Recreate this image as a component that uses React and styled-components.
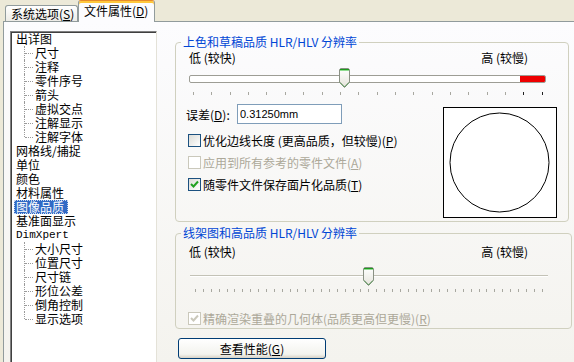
import React from 'react'
import styled, { createGlobalStyle } from 'styled-components'

const GlobalStyle = createGlobalStyle`
  html, body {
    margin: 0;
    padding: 0;
    overflow: hidden;
  }
  body {
    font-family: 'Noto Sans CJK SC', 'Liberation Sans', sans-serif;
    font-size: 12px;
    color: #000;
  }
`

const treeItems = [
  { label: '出详图' },
  { label: '尺寸', child: true },
  { label: '注释', child: true },
  { label: '零件序号', child: true },
  { label: '箭头', child: true },
  { label: '虚拟交点', child: true },
  { label: '注解显示', child: true },
  { label: '注解字体', child: true, last: true },
  { label: '网格线/捕捉' },
  { label: '单位' },
  { label: '颜色' },
  { label: '材料属性' },
  { label: '图像品质', selected: true },
  { label: '基准面显示' },
  { label: 'DimXpert', mono: true },
  { label: '大小尺寸', child: true },
  { label: '位置尺寸', child: true },
  { label: '尺寸链', child: true },
  { label: '形位公差', child: true },
  { label: '倒角控制', child: true },
  { label: '显示选项', child: true, last: true }
]

const Window = styled.div`
  width: 574px;
  height: 362px;
  background: #ece9d8;
  overflow: hidden;
  display: flex;
  flex-direction: column;
`

const TabStrip = styled.div`
  display: flex;
  align-items: flex-end;
  height: 21px;
  padding-left: 5px;
  flex-shrink: 0;
  position: relative;
  z-index: 1;
`

const Tab = styled.div`
  box-sizing: border-box;
  width: ${p => (p.$active ? 77 : 73)}px;
  height: ${p => (p.$active ? 22 : 16)}px;
  margin-bottom: ${p => (p.$active ? -1 : 0)}px;
  border: 1px solid #919b9c;
  border-bottom: none;
  border-top-color: ${p => (p.$active ? '#e68b2c' : '#919b9c')};
  border-radius: 3px 3px 0 0;
  box-shadow: ${p => (p.$active ? 'inset 0 2px 0 #ffc83c' : 'none')};
  background: ${p => (p.$active ? '#fcfcfe' : 'linear-gradient(#ffffff, #ecebe6)')};
  padding: ${p => (p.$active ? '3px' : '1px')} 0 0 5px;
  line-height: 14px;
  white-space: nowrap;
`

const Panel = styled.div`
  flex: 1;
  display: flex;
  gap: 18px;
  margin-left: 3px;
  padding: 9px 0 0 6px;
  border-left: 1px solid #919b9c;
  border-top: 1px solid #919b9c;
  background: linear-gradient(#fcfcfe, #f4f3ee);
  overflow: hidden;
`

const Tree = styled.div`
  box-sizing: border-box;
  width: 147px;
  height: 340px;
  flex-shrink: 0;
  padding-left: 5px;
  background: #fff;
  border: 1px solid;
  border-color: #808080 #e4e2d8 #e4e2d8 #808080;
  box-shadow: inset 1px 1px 0 #404040;
`

const TreeRow = styled.div`
  display: flex;
  align-items: center;
  height: 14px;
  line-height: 14px;
  white-space: nowrap;
`

const Connector = styled.span`
  position: relative;
  width: 8px;
  height: ${p => (p.$last ? '7px' : '14px')};
  align-self: flex-start;
  margin: 0 2px 0 8px;
  border-left: 1px dotted #9a9a9a;
  flex-shrink: 0;

  &::after {
    content: '';
    position: absolute;
    left: 0;
    top: 7px;
    width: 8px;
    border-top: 1px dotted #9a9a9a;
  }
`

const TreeLabel = styled.span`
  margin-left: ${p => (p.$selected ? -2 : 0)}px;
  padding: ${p => (p.$selected ? '0 4px 0 2px' : '0')};
  background: ${p => (p.$selected ? '#316ac5' : 'transparent')};
  color: ${p => (p.$selected ? '#fff' : '#000')};
  font-family: ${p => (p.$mono ? "'Liberation Mono', monospace" : 'inherit')};
  font-size: ${p => (p.$mono ? '11px' : '12px')};
  outline: ${p => (p.$selected ? '1px dotted #c8d8f0' : 'none')};
  outline-offset: -1px;
`

const Content = styled.div`
  display: flex;
  flex-direction: column;
  padding-top: 4px;
`

const Group = styled.fieldset`
  box-sizing: border-box;
  margin: ${p => p.$mt || 0}px 0 0 0;
  width: ${p => p.$width}px;
  height: ${p => p.$height}px;
  padding: ${p => p.$pt}px ${p => p.$pr}px 0 13px;
  border: 1px solid #d0d0bf;
  border-radius: 4px;
  min-inline-size: 0;
`

const Legend = styled.legend`
  padding: 0 2px;
  margin-left: -8px;
  line-height: 14px;
  color: #0046d5;
  white-space: nowrap;
`

const LabelRow = styled.div`
  display: flex;
  justify-content: space-between;
  height: 14px;
  line-height: 14px;
  padding-right: ${p => p.$pr}px;
  white-space: nowrap;
`

const SliderBox = styled.div`
  position: relative;
  display: flex;
  flex-direction: column;
  height: ${p => p.$h}px;
  margin-right: ${p => p.$mr}px;
`

const Track = styled.div`
  box-sizing: border-box;
  display: flex;
  height: 8px;
  margin-top: 10px;
  border: 1px solid #9d9d95;
  border-radius: 2px;
  background: #fff;
  overflow: hidden;
`

const TrackFill = styled.div`
  margin-left: auto;
  width: 25px;
  background: #ee0000;
`

const ThinTrack = styled.div`
  margin: 16px 9px 0 1px;
  border-top: 1px solid #c3c2b6;
  border-bottom: 1px solid #ffffff;
`

const ThumbSpot = styled.div`
  position: absolute;
  top: ${p => p.$top}px;
  left: ${p => p.$left}px;
  line-height: 0;
`

const Ticks = styled.div`
  display: flex;
  justify-content: space-between;
  height: 3px;
  margin-top: ${p => p.$mt}px;
  padding: 0 ${p => p.$pr}px 0 ${p => p.$pl}px;
`

const Tick = styled.span`
  width: 1px;
  height: 3px;
  background: ${p => (p.$dark ? '#202020' : '#a8a8a0')};
`

const Lower = styled.div`
  display: flex;
  justify-content: space-between;
  margin-top: 9px;
`

const FieldRow = styled.div`
  display: flex;
  align-items: center;
  height: 20px;
  margin-left: -3px;
`

const FieldLabel = styled.span`
  width: 51px;
  white-space: nowrap;
`

const Input = styled.input`
  box-sizing: border-box;
  width: 105px;
  height: 20px;
  margin: 0;
  padding: 0 0 0 2px;
  border: 1px solid #7f9db9;
  background: #fff;
  font-family: 'Liberation Sans', sans-serif;
  font-size: 11px;
  color: #000;
  outline: none;
`

const Checks = styled.div`
  margin-top: ${p => p.$mt}px;
`

const CheckRow = styled.div`
  display: flex;
  align-items: center;
  height: ${p => p.$h || 22}px;
  margin-left: -1px;
  white-space: nowrap;
  color: ${p => (p.$disabled ? '#aca899' : '#000')};
`

const Box = styled.span`
  box-sizing: border-box;
  display: inline-flex;
  align-items: center;
  justify-content: center;
  width: 13px;
  height: 13px;
  margin-right: 2px;
  flex-shrink: 0;
  border: 1px solid ${p => (p.$disabled ? '#cac8bb' : '#1c5180')};
  background: ${p => (p.$disabled ? '#fff' : 'linear-gradient(135deg, #dcdcd7, #ffffff)')};
`

const Preview = styled.div`
  box-sizing: border-box;
  width: 114px;
  height: 111px;
  margin-top: 3px;
  border: 1px solid #000;
  background: #fff;
  line-height: 0;
`

const Button = styled.button`
  box-sizing: border-box;
  width: 148px;
  height: 21px;
  margin: 9px 0 0 3px;
  padding: 0;
  border: 1px solid #003c74;
  border-radius: 3px;
  background: linear-gradient(#ffffff, #f3f3ee 80%, #d8d2c6);
  font-family: 'Noto Sans CJK SC', sans-serif;
  font-size: 12px;
  line-height: 14px;
  color: #000;
`

const Thumb = ({ h = 20 }) => (
  <svg width="11" height={h} viewBox={`0 0 11 ${h}`}>
    <defs>
      <linearGradient id={`thumb${h}`} x1="0" x2="0" y1="0" y2="1">
        <stop offset="0" stopColor="#ffffff" />
        <stop offset="1" stopColor="#e4e3da" />
      </linearGradient>
    </defs>
    <path
      d={`M1.5 0.5 H9.5 L10.5 1.5 V${h - 6} L5.5 ${h - 0.5} L0.5 ${h - 6} V1.5 Z`}
      fill={`url(#thumb${h})`}
      stroke="#8a9184"
    />
    <path d="M1 1.5 H10" stroke="#1e9a1e" />
    <path d="M1 2.5 H10" stroke="#8fdc8f" />
    <path
      d={`M1 ${h - 5.5} L5.5 ${h - 1} L10 ${h - 5.5}`}
      stroke="#4f8f4f"
      fill="none"
    />
  </svg>
)

const Check = ({ color }) => (
  <svg width="9" height="9" viewBox="0 0 9 9">
    <path d="M1 4 L3.5 6.5 L8 1.5" stroke={color} strokeWidth="2" fill="none" />
  </svg>
)

const CheckItem = ({ checked, disabled, h, children }) => (
  <CheckRow $disabled={disabled} $h={h}>
    <Box $disabled={disabled}>
      {checked ? <Check color={disabled ? '#cac8bb' : '#21a121'} /> : null}
    </Box>
    {children}
  </CheckRow>
)

export default function App() {
  return (
    <Window>
      <GlobalStyle />
      <TabStrip>
        <Tab>
          系统选项(<u>S</u>)
        </Tab>
        <Tab $active>
          文件属性(<u>D</u>)
        </Tab>
      </TabStrip>
      <Panel>
        <Tree>
          {treeItems.map(item => (
            <TreeRow key={item.label}>
              {item.child ? <Connector $last={item.last} /> : null}
              <TreeLabel $selected={item.selected} $mono={item.mono}>
                {item.label}
              </TreeLabel>
            </TreeRow>
          ))}
        </Tree>
        <Content>
          <Group $width={394} $height={187} $pt={2} $pr={11}>
            <Legend>上色和草稿品质 HLR/HLV 分辨率</Legend>
            <LabelRow $pr={29}>
              <span>低 (较快)</span>
              <span>高 (较慢)</span>
            </LabelRow>
            <SliderBox $h={24} $mr={11}>
              <Track>
                <TrackFill />
              </Track>
              <ThumbSpot $top={3} $left={150}>
                <Thumb h={20} />
              </ThumbSpot>
            </SliderBox>
            <Ticks $mt={3} $pl={4} $pr={14}>
              {Array.from({ length: 20 }, (_, i) => (
                <Tick key={i} $dark={i >= 18} />
              ))}
            </Ticks>
            <Lower>
              <div>
                <FieldRow>
                  <FieldLabel>
                    误差(<u>D</u>):
                  </FieldLabel>
                  <Input readOnly value="0.31250mm" />
                </FieldRow>
                <Checks $mt={5}>
                  <CheckItem>
                    优化边线长度 (更高品质，但较慢)(<u>P</u>)
                  </CheckItem>
                  <CheckItem disabled>
                    应用到所有参考的零件文件(<u>A</u>)
                  </CheckItem>
                  <CheckItem checked>
                    随零件文件保存面片化品质(<u>T</u>)
                  </CheckItem>
                </Checks>
              </div>
              <Preview>
                <svg width="112" height="109" viewBox="0 0 112 109">
                  <circle cx="55.5" cy="54.5" r="49.5" fill="none" stroke="#000" />
                </svg>
              </Preview>
            </Lower>
          </Group>
          <Group $mt={4} $width={397} $height={103} $pt={5} $pr={14}>
            <Legend>线架图和高品质 HLR/HLV 分辨率</Legend>
            <LabelRow $pr={29}>
              <span>低 (较快)</span>
              <span>高 (较慢)</span>
            </LabelRow>
            <SliderBox $h={28} $mr={0}>
              <ThinTrack />
              <ThumbSpot $top={8} $left={174}>
                <Thumb h={19} />
              </ThumbSpot>
            </SliderBox>
            <Ticks $mt={2} $pl={6} $pr={14}>
              {Array.from({ length: 45 }, (_, i) => (
                <Tick key={i} />
              ))}
            </Ticks>
            <Checks $mt={16}>
              <CheckItem checked disabled h={20}>
                精确渲染重叠的几何体(品质更高但更慢)(<u>R</u>)
              </CheckItem>
            </Checks>
          </Group>
          <Button>
            查看性能(<u>G</u>)
          </Button>
        </Content>
      </Panel>
    </Window>
  )
}
